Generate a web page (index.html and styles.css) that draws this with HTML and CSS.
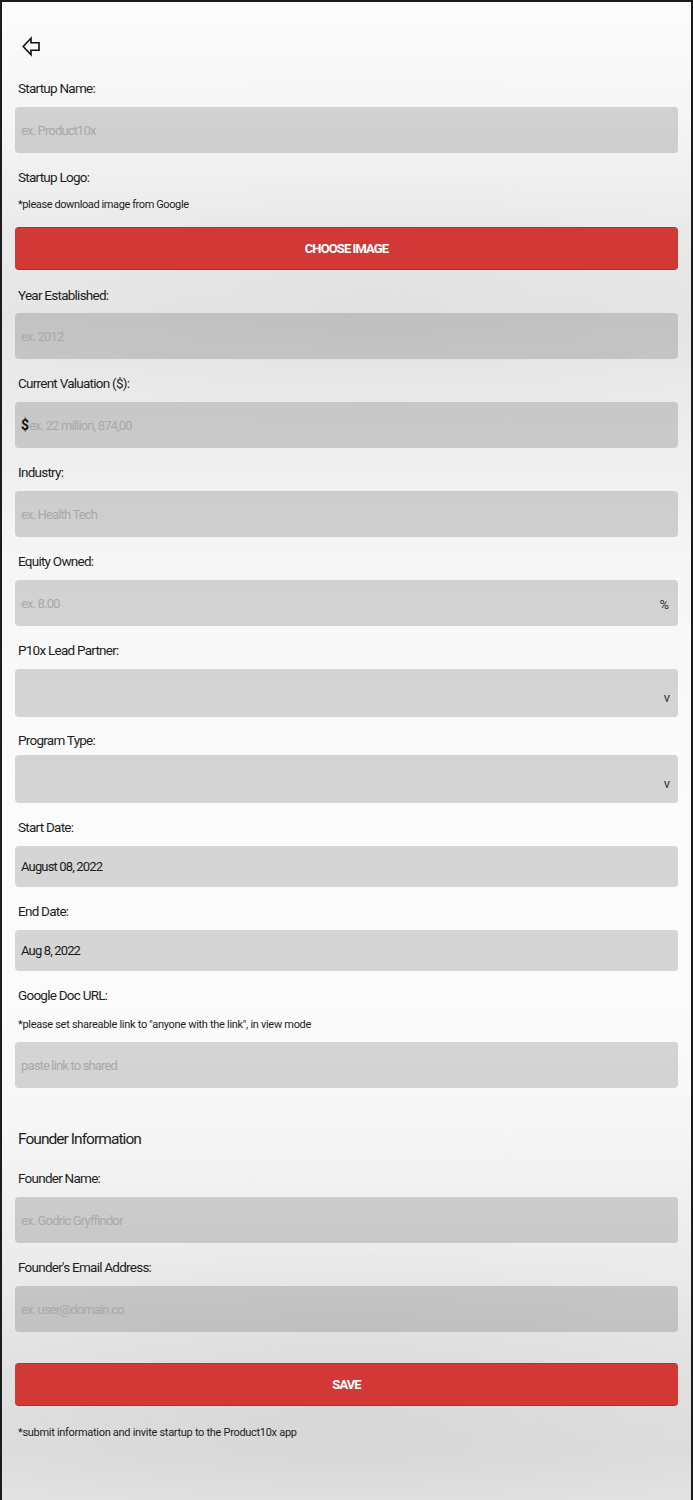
FILE: index.html
```html
<!DOCTYPE html>
<html lang="en">
<head>
<meta charset="utf-8">
<title>Add Startup</title>
<link rel="stylesheet" href="styles.css">
</head>
<body>
<div class="page">
  <div class="back">
    <svg width="19" height="21" viewBox="0 0 19 21" aria-hidden="true"><path d="M1.2 10.5 L9 2.2 V6.8 H17 V14.2 H9 V18.8 Z" fill="none" stroke="#111" stroke-width="1.6" stroke-linejoin="miter"/></svg>
  </div>

  <label class="label first">Startup Name:</label>
  <div class="input"><span class="ph">ex. Product10x</span></div>

  <label class="label">Startup Logo:</label>
  <p class="note note-logo">*please download image from Google</p>
  <button class="btn btn-choose">CHOOSE IMAGE</button>

  <label class="label">Year Established:</label>
  <div class="input"><span class="ph">ex. 2012</span></div>

  <label class="label">Current Valuation ($):</label>
  <div class="input"><span class="cur">$</span><span class="ph">ex. 22 million, 874,00</span></div>

  <label class="label">Industry:</label>
  <div class="input"><span class="ph">ex. Health Tech</span></div>

  <label class="label">Equity Owned:</label>
  <div class="input split"><span class="ph">ex. 8.00</span><span class="suffix">%</span></div>

  <label class="label">P10x Lead Partner:</label>
  <div class="input select"><span class="chev">v</span></div>

  <label class="label tight">Program Type:</label>
  <div class="input select near"><span class="chev">v</span></div>

  <label class="label">Start Date:</label>
  <div class="input date"><span class="val">August 08, 2022</span></div>

  <label class="label">End Date:</label>
  <div class="input date"><span class="val">Aug 8, 2022</span></div>

  <label class="label">Google Doc URL:</label>
  <p class="note note-doc">*please set shareable link to "anyone with the link", in view mode</p>
  <div class="input"><span class="ph">paste link to shared</span></div>

  <h2 class="section">Founder Information</h2>

  <label class="label after-section">Founder Name:</label>
  <div class="input"><span class="ph">ex. Godric Gryffindor</span></div>

  <label class="label">Founder's Email Address:</label>
  <div class="input"><span class="ph">ex. user@domain.co</span></div>

  <button class="btn btn-save">SAVE</button>
  <p class="note note-save">*submit information and invite startup to the Product10x app</p>
</div>
</body>
</html>
```

FILE: styles.css
```css
* { box-sizing: border-box; }
html, body { margin: 0; padding: 0; }
body {
  font-family: Roboto, "Liberation Sans", sans-serif;
  color: #1a1a1a;
}
.page {
  width: 693px;
  height: 1500px;
  border: 2px solid #1c1c1c;
  border-bottom: none;
  padding: 0 13px;
  display: flex;
  flex-direction: column;
  background:
    radial-gradient(ellipse 420px 140px at 55% 300px, rgba(0,0,0,0.025), rgba(0,0,0,0)),
    radial-gradient(ellipse 460px 180px at 50% 1400px, rgba(0,0,0,0.04), rgba(0,0,0,0)),
    linear-gradient(180deg,
      #fcfcfc 0px,
      #f5f5f5 120px,
      #eaeaea 230px,
      #e6e6e6 320px,
      #ededed 430px,
      #f6f6f6 560px,
      #fbfbfb 800px,
      #fbfbfb 1000px,
      #f6f6f6 1120px,
      #ebebeb 1260px,
      #e2e2e2 1380px,
      #dedede 1450px,
      #e3e3e3 1500px);
  overflow: hidden;
}
.back {
  margin-top: 32px;
  margin-left: 7px;
  height: 24px;
  display: flex;
  align-items: center;
}
.label {
  display: block;
  font-size: 13.5px;
  line-height: 20px;
  letter-spacing: -0.75px;
  color: #1d1d1d;
  padding-left: 3px;
  margin-top: 14px;
}
.label.first { margin-top: 20px; }
.label.tight { margin-top: 13px; }
.label.after-section { margin-top: 18px; }
.input {
  margin-top: 9px;
  height: 46px;
  border-radius: 4px;
  background: rgba(0,0,0,0.15);
  display: flex;
  align-items: center;
  padding: 0 6px;
  font-size: 13px;
  letter-spacing: -0.85px;
}
.input.select { height: 48px; padding: 0 8px; justify-content: flex-end; }
.input.select.near { margin-top: 5px; }
.input.date { height: 41px; }
.input.split { justify-content: space-between; padding-right: 9px; }
.ph { color: #a9a9a9; }
.cur { color: #111; font-weight: 700; font-size: 14px; letter-spacing: 0; }
.val { color: #1a1a1a; }
.suffix { color: #333; font-size: 13px; letter-spacing: 0; padding-top: 2px; }
.chev { color: #333; padding-top: 8px; font-size: 13px; letter-spacing: 0; }
.note {
  margin: 0;
  font-size: 11px;
  line-height: 16px;
  letter-spacing: -0.4px;
  color: #1d1d1d;
  padding-left: 3px;
}
.note-logo { margin-top: 10px; }
.note-doc { margin-top: 12px; letter-spacing: -0.3px; }
.note-save { margin-top: 19px; letter-spacing: -0.3px; }
.btn {
  display: block;
  width: 100%;
  height: 43px;
  border: none;
  border-top: 1px solid #c82a27;
  border-bottom: 1px solid #c42624;
  border-radius: 4px;
  background: #d23836;
  color: #fff;
  font-family: Roboto, "Liberation Sans", sans-serif;
  font-size: 13px;
  font-weight: 700;
  letter-spacing: -0.9px;
  text-align: center;
  padding: 0;
}
.btn-choose { margin-top: 14px; }
.btn-save { margin-top: 31px; }
.btn-choose + .label { margin-top: 15px; }
.btn-choose + .label + .input { margin-top: 8px; }
.section {
  margin: 40px 0 0;
  font-size: 15.5px;
  line-height: 22px;
  font-weight: 400;
  letter-spacing: -0.95px;
  color: #1d1d1d;
  padding-left: 3px;
}
```
